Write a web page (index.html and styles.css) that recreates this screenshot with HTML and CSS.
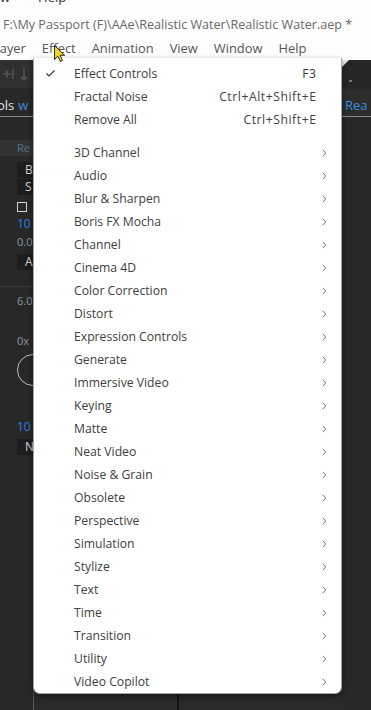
FILE: index.html
```html
<!DOCTYPE html>
<html lang="en">
<head>
  <meta charset="UTF-8" />
  <meta name="viewport" content="width=device-width, initial-scale=1.0"/>
  <title>Realistic Water - Effect menu</title>
  <link rel="stylesheet" href="styles.css">
</head>
<body>
  <div class="screen">
    <header class="titlebar">
      <div class="prev-line"><span>w</span><span>Help</span></div>
      <div class="title">F:\My Passport (F)\AAe\Realistic Water\Realistic Water.aep *</div>
      <nav class="menubar">
        <span class="clipped">Layer</span>
        <span>Effect</span>
        <span>Animation</span>
        <span>View</span>
        <span>Window</span>
        <span>Help</span>
      </nav>
    </header>

    <main class="workspace">
      <section class="panel panel-left">
        <div class="toolbar">
          <svg width="34" height="28" viewBox="0 0 34 28">
            <path d="M3 14h8M7 10v8M13 9v10" stroke="#555" stroke-width="1.5" fill="none"/>
            <path d="M24 8v12M21 17l3 3 3-3" stroke="#555" stroke-width="1.5" fill="none"/>
          </svg>
        </div>
        <div class="tab"><span class="tab-name">ols</span><span class="tab-comp">w</span></div>
        <div class="props">
          <div class="prop-head">Re</div>
          <div class="box">B</div>
          <div class="box">S</div>
          <div class="check"></div>
          <div class="num blue">10</div>
          <div class="num">0.0</div>
          <div class="box box-a">A</div>
          <div class="rule"></div>
          <div class="num">6.0</div>
          <div class="num gap">0x</div>
          <div class="dial"></div>
          <div class="num blue">10</div>
          <div class="box">N</div>
        </div>
      </section>
      <section class="panel-center">
        <div class="subpanel"></div>
        <div class="subpanel"></div>
      </section>
      <section class="panel panel-right">
        <div class="toolbar toolbar-right"><span class="corner"></span><span class="dot"></span></div>
        <div class="tab"><span class="tab-comp">Rea</span></div>
      </section>
    </main>

    <div class="dropdown">
      <div class="item">
        <svg class="tick" width="9" height="7" viewBox="0 0 9 7"><path d="M0.5 3.5l2.5 2.5 5.5-5.5" stroke="#333" stroke-width="1.1" fill="none"/></svg>
        <span class="label">Effect Controls</span><span class="keys">F3</span><span></span>
      </div>
      <div class="item"><span></span><span class="label">Fractal Noise</span><span class="keys">Ctrl+Alt+Shift+E</span><span></span></div>
      <div class="item"><span></span><span class="label">Remove All</span><span class="keys">Ctrl+Shift+E</span><span></span></div>
      <div class="separator"></div>
      <div id="categories"></div>
    </div>

    <svg class="cursor" width="11" height="17" viewBox="0 0 11 17">
      <path d="M0.5 0.5v14l3.4-3.3 2.4 5.3 2.2-1-2.4-5.2h4.6z" fill="#f4d51c" stroke="#2a2a2a" stroke-width="1"/>
    </svg>
  </div>

  <script>
    const categories = [
      "3D Channel", "Audio", "Blur & Sharpen", "Boris FX Mocha", "Channel",
      "Cinema 4D", "Color Correction", "Distort", "Expression Controls",
      "Generate", "Immersive Video", "Keying", "Matte", "Neat Video",
      "Noise & Grain", "Obsolete", "Perspective", "Simulation", "Stylize",
      "Text", "Time", "Transition", "Utility", "Video Copilot"
    ];
    const list = document.getElementById("categories");

    categories.forEach((name) => {
      const row = document.createElement("div");
      row.className = "item";
      row.innerHTML = `
        <span></span>
        <span class="label"></span>
        <span class="keys"></span>
        <svg class="chevron" width="5" height="8" viewBox="0 0 5 8"><path d="M0.8 0.8l3 3.2-3 3.2" stroke="#777" stroke-width="1" fill="none"/></svg>
      `;
      row.querySelector(".label").textContent = name;
      list.appendChild(row);
    });
  </script>
</body>
</html>
```

FILE: styles.css
```css
body {
  margin: 0;
  background-color: #282828;
  font-family: "Open Sans", "Noto Sans", sans-serif;
}
.screen {
  width: 371px;
  height: 710px;
  position: relative;
  overflow: hidden;
  display: flex;
  flex-direction: column;
}
.titlebar {
  height: 60px;
  background-color: #fdfdfd;
  color: #4a4a4a;
  font-size: 12px;
  flex-shrink: 0;
}
.prev-line {
  height: 6px;
  overflow: hidden;
  display: flex;
  align-items: flex-end;
  gap: 28px;
  line-height: 18px;
  font-size: 13px;
  color: #333;
}
.title {
  margin-top: 10px;
  padding-left: 3px;
  line-height: 18px;
  font-size: 12.6px;
  color: #6a6a6a;
  white-space: nowrap;
}
.menubar {
  margin-top: 5px;
  line-height: 18px;
  display: flex;
  gap: 16px;
  font-size: 12.9px;
  color: #555;
  white-space: nowrap;
}
.menubar .clipped {
  margin-left: -7px;
}
.workspace {
  flex-grow: 1;
  display: flex;
  background-color: #282828;
}
.panel {
  overflow: hidden;
  display: flex;
  flex-direction: column;
}
.panel-left {
  width: 33px;
  border-right: 1px solid #555;
}
.panel-right {
  width: 29px;
}
.panel-center {
  flex-grow: 1;
  display: flex;
  gap: 2px;
  background-color: #161616;
}
.subpanel {
  background-color: #2a2a2a;
  width: 143px;
}
.subpanel + .subpanel {
  flex-grow: 1;
}
.toolbar {
  height: 28px;
  background-color: #303030;
  flex-shrink: 0;
}
.toolbar-right {
  position: relative;
  background-color: #262626;
}
.corner {
  position: absolute;
  top: 0;
  left: 0;
  border-top: 7px solid #e8e8e8;
  border-right: 7px solid transparent;
}
.dot {
  position: absolute;
  left: 7px;
  top: 20px;
  width: 3px;
  height: 2px;
  background-color: #777;
}
.tab {
  height: 28px;
  margin-top: 1px;
  border-bottom: 1px solid #8a8a8a;
  display: flex;
  align-items: flex-end;
  padding-bottom: 2px;
  box-sizing: border-box;
  font-size: 13px;
  white-space: nowrap;
}
.panel-right .tab {
  background-color: #2d2d2d;
  padding-left: 3px;
}
.tab-name {
  color: #e6e6e6;
  margin-left: -3px;
}
.tab-comp {
  color: #3d8ede;
  margin-left: 4px;
}
.panel-right .tab-comp {
  margin-left: 0;
}
.props {
  padding-top: 23px;
  display: flex;
  flex-direction: column;
  font-size: 11px;
  color: #8a96a6;
  white-space: nowrap;
}
.prop-head {
  height: 16px;
  line-height: 16px;
  background-color: #333;
  padding-left: 17px;
  color: #58728e;
}
.box {
  margin: 6px 0 0 17px;
  height: 16px;
  line-height: 16px;
  background-color: #1d1d1d;
  color: #d8d8d8;
  padding-left: 8px;
  font-size: 12px;
}
.box + .box {
  margin-top: 1px;
}
.box-a {
  margin-top: 6px;
}
.check {
  margin: 7px 0 0 17px;
  width: 8px;
  height: 8px;
  border: 1.5px solid #d0d0d0;
}
.num {
  margin: 6px 0 0 17px;
  line-height: 12px;
}
.num.blue {
  color: #2f80e8;
  font-size: 12px;
}
.rule {
  margin-top: 16px;
  height: 1px;
  background-color: #3a3a3a;
}
.rule + .num {
  margin-top: 8px;
}
.num.gap {
  margin-top: 28px;
}
.dial {
  margin: 7px 0 0 17px;
  width: 30px;
  height: 30px;
  border: 1.5px solid #bdbdbd;
  border-radius: 50%;
  flex-shrink: 0;
}
.dial + .num {
  margin-top: 35px;
}
.num + .box {
  margin-top: 6px;
}
.dropdown {
  position: absolute;
  left: 33px;
  top: 58px;
  width: 307px;
  padding: 4px 0 0;
  background-color: #fff;
  border: 1px solid #a6a6a6;
  border-top: none;
  border-radius: 0 0 7px 7px;
  box-shadow: 0 3px 6px rgba(0, 0, 0, 0.45);
  font-size: 12.2px;
  color: #404040;
}
.item {
  height: 23px;
  display: grid;
  grid-template-columns: 40px 1fr auto 25px;
  align-items: center;
  white-space: nowrap;
}
.tick {
  margin-left: 12px;
}
.keys {
  text-align: right;
  letter-spacing: 0.55px;
  margin-right: -0.5px;
}
.chevron {
  margin-left: 6px;
}
.separator {
  height: 10px;
}
.cursor {
  position: absolute;
  left: 54px;
  top: 45px;
}
```
